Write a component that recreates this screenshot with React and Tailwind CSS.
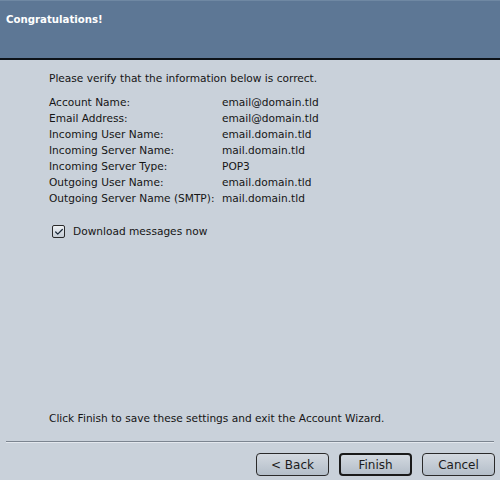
import { Check } from "lucide-react";

const rows = [
  ["Account Name:", "email@domain.tld"],
  ["Email Address:", "email@domain.tld"],
  ["Incoming User Name:", "email.domain.tld"],
  ["Incoming Server Name:", "mail.domain.tld"],
  ["Incoming Server Type:", "POP3"],
  ["Outgoing User Name:", "email.domain.tld"],
  ["Outgoing Server Name (SMTP):", "mail.domain.tld"],
];

function WizardButton({ label, primary }) {
  return (
    <button
      className={
        "h-[23px] w-[73px] rounded-[4px] bg-gradient-to-b from-[#d3d9e0] to-[#b4bec9] text-[12px] text-[#1c1c1c] " +
        (primary ? "border-2 border-[#1a1a1a]" : "border border-[#2a2a2a]")
      }
    >
      {label}
    </button>
  );
}

export default function App() {
  return (
    <div className="flex h-[480px] w-[500px] flex-col bg-[#c9d1da] font-['DejaVu_Sans',sans-serif] text-[10.6px] text-[#151515]">
      <header className="h-[60px] border-t border-t-[#6f88a3] border-b-2 border-b-[#0d1218] bg-[#5d7795] px-[6px] pt-[11px]">
        <h1 className="text-[10.2px] font-bold text-white">Congratulations!</h1>
      </header>

      <section className="flex flex-1 flex-col px-[49px] pt-[11px]">
        <p>Please verify that the information below is correct.</p>

        <div className="mt-[7px] grid grid-cols-[173px_1fr] leading-[16px]">
          {rows.map(([label, value]) => (
            <div key={label} className="contents">
              <span>{label}</span>
              <span>{value}</span>
            </div>
          ))}
        </div>

        <label className="mt-[18px] flex items-center gap-[8px] pl-[3px]">
          <span className="flex h-[13px] w-[13px] items-center justify-center rounded-[2px] border border-[#2a2a2a] bg-gradient-to-b from-[#eef1f4] to-[#c4ccd5]">
            <Check size={10} strokeWidth={3} className="text-[#1c2a3a]" />
          </span>
          Download messages now
        </label>

        <p className="mt-auto mb-[14px]">
          Click Finish to save these settings and exit the Account Wizard.
        </p>
      </section>

      <div className="mx-[6px] border-t border-t-[#7c8590] border-b border-b-[#e3e8ee]" />

      <footer className="flex justify-end gap-[10px] pl-[5px] pr-[5px] pt-[10px] pb-[4px]">
        <WizardButton label="< Back" />
        <WizardButton label="Finish" primary />
        <WizardButton label="Cancel" />
      </footer>
    </div>
  );
}
